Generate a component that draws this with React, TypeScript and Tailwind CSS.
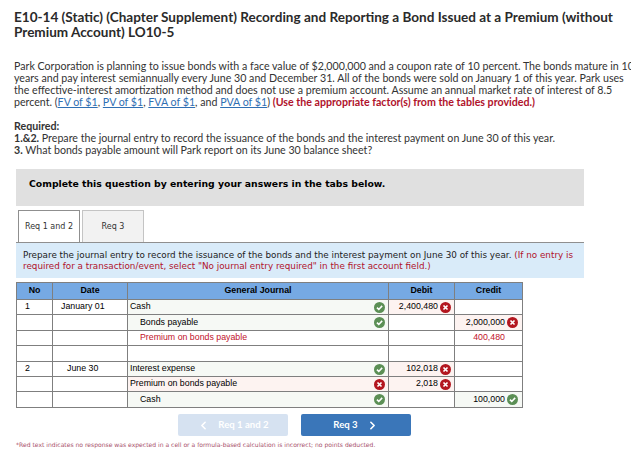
import { ReactNode } from "react";
import { ChevronLeft, ChevronRight } from "lucide-react";

function OkIcon() {
    return (
        <svg viewBox="0 0 12 12" className="w-[11px] h-[11px] shrink-0">
            <circle cx="6" cy="6" r="6" fill="#5b8f55" />
            <path d="M3.2 6.2 L5.2 8.1 L8.9 4.2" fill="none" stroke="#fff" strokeWidth="1.7" />
        </svg>
    );
}

function BadIcon() {
    return (
        <svg viewBox="0 0 12 12" className="w-[11px] h-[11px] shrink-0">
            <circle cx="6" cy="6" r="6" fill="#b3161f" />
            <path d="M3.8 3.8 L8.2 8.2 M8.2 3.8 L3.8 8.2" fill="none" stroke="#fff" strokeWidth="1.8" />
        </svg>
    );
}

function Link({ children }: { children: ReactNode }) {
    return <span className="text-[#2f6fb3] underline">{children}</span>;
}

type Row = {
    no?: string;
    date?: string;
    account?: string;
    indent?: boolean;
    red?: boolean;
    acctState?: "ok" | "bad";
    debit?: string;
    debitState?: "ok" | "bad";
    credit?: string;
    creditState?: "ok" | "bad";
    creditRed?: boolean;
    height: string;
};

const rows: Row[] = [
    { no: "1", date: "January 01", account: "Cash", acctState: "ok", debit: "2,400,480", debitState: "bad", height: "h-[15px]" },
    { account: "Bonds payable", indent: true, acctState: "ok", credit: "2,000,000", creditState: "bad", height: "h-[16px]" },
    { account: "Premium on bonds payable", indent: true, red: true, credit: "400,480", creditRed: true, height: "h-[15px]" },
    { height: "h-[16px]" },
    { no: "2", date: "June 30", account: "Interest expense", acctState: "ok", debit: "102,018", debitState: "bad", height: "h-[15px]" },
    { account: "Premium on bonds payable", acctState: "bad", debit: "2,018", debitState: "bad", height: "h-[15px]" },
    { account: "Cash", indent: true, acctState: "ok", credit: "100,000", creditState: "ok", height: "h-[16px]" },
];

function tint(state?: "ok" | "bad") {
    if (state === "ok") return "bg-[#f6f9f5]";
    if (state === "bad") return "bg-[#fdf3f1]";
    return "bg-white";
}

function StateIcon({ state }: { state?: "ok" | "bad" }) {
    if (state === "ok") return <OkIcon />;
    if (state === "bad") return <BadIcon />;
    return null;
}

function JournalTable() {
    return (
        <table className="ml-4 mt-1 w-[506px] table-fixed border-collapse font-['Liberation_Sans',sans-serif] text-[8.8px] text-black">
            <colgroup>
                <col className="w-[36px]" />
                <col className="w-[75px]" />
                <col className="w-[261px]" />
                <col className="w-[66px]" />
                <col className="w-[68px]" />
            </colgroup>
            <thead>
                <tr className="h-[17px] bg-[#76a9e3] font-bold">
                    <th className="border border-[#7f7f7f] p-0">No</th>
                    <th className="border border-[#7f7f7f] p-0">Date</th>
                    <th className="border border-[#7f7f7f] p-0">General Journal</th>
                    <th className="border border-[#7f7f7f] p-0">Debit</th>
                    <th className="border border-[#7f7f7f] p-0">Credit</th>
                </tr>
            </thead>
            <tbody>
                {rows.map((r, i) => (
                    <tr key={i} className={r.height}>
                        <td className="border border-[#7f7f7f] p-0 pl-[8px]">{r.no}</td>
                        <td className={`border border-[#7f7f7f] p-0 ${r.no === "2" ? "pl-[14px]" : "pl-[8px]"}`}>{r.date}</td>
                        <td className={`border border-[#7f7f7f] p-0 ${tint(r.acctState)}`}>
                            <div className={`flex items-center justify-between pr-[3px] ${r.indent ? "pl-[12px]" : "pl-[2px]"}`}>
                                <span className={r.red ? "text-[#c1122b]" : ""}>{r.account}</span>
                                <StateIcon state={r.acctState} />
                            </div>
                        </td>
                        <td className={`border border-[#7f7f7f] p-0 ${tint(r.debitState)}`}>
                            <div className="flex items-center justify-end gap-[2px] pr-[3px]">
                                <span>{r.debit}</span>
                                <StateIcon state={r.debitState} />
                            </div>
                        </td>
                        <td className={`border border-[#7f7f7f] p-0 ${tint(r.creditState)}`}>
                            <div className={`flex items-center justify-end gap-[2px] pr-[4px] ${r.creditRed ? "pr-[17px]" : ""}`}>
                                <span className={r.creditRed ? "text-[#c1122b]" : ""}>{r.credit}</span>
                                <StateIcon state={r.creditState} />
                            </div>
                        </td>
                    </tr>
                ))}
            </tbody>
        </table>
    );
}

export default function App() {
    return (
        <main className="h-[456px] w-[631px] overflow-hidden bg-white font-['Lato',sans-serif] text-[#333]">
            <div className="whitespace-nowrap pl-[14px] pt-[10px]">
                <h1 className="text-[13.55px] font-bold leading-[15px] text-[#2a2a2a]">
                    E10-14 (Static) (Chapter Supplement) Recording and Reporting a Bond Issued at a Premium (without
                    <br />
                    Premium Account) LO10-5
                </h1>

                <p className="mt-[20px] text-[10.65px] leading-[12px]">
                    Park Corporation is planning to issue bonds with a face value of $2,000,000 and a coupon rate of 10 percent. The bonds mature in 10
                    <br />
                    years and pay interest semiannually every June 30 and December 31. All of the bonds were sold on January 1 of this year. Park uses
                    <br />
                    the effective-interest amortization method and does not use a premium account. Assume an annual market rate of interest of 8.5
                    <br />
                    percent. (<Link>FV of $1</Link>, <Link>PV of $1</Link>, <Link>FVA of $1</Link>, and <Link>PVA of $1</Link>){" "}
                    <b className="text-[#b0122b]">(Use the appropriate factor(s) from the tables provided.)</b>
                </p>

                <p className="mt-[12px] text-[10.65px] leading-[12px]">
                    <b>Required:</b>
                    <br />
                    <b>1.&amp;2.</b> Prepare the journal entry to record the issuance of the bonds and the interest payment on June 30 of this year.
                    <br />
                    <b>3.</b> What bonds payable amount will Park report on its June 30 balance sheet?
                </p>
            </div>

            <div className="ml-4 mt-[13px] h-[37px] w-[568px] bg-[#e0e0e0] pl-[13px] pt-[9px] font-['DejaVu_Sans',sans-serif] text-[9.3px] font-bold leading-[12px] text-black">
                Complete this question by entering your answers in the tabs below.
            </div>

            <div className="ml-[18px] mt-1 flex h-[32px] gap-[2px] font-['DejaVu_Sans',sans-serif] text-[8px]">
                <div className="flex h-[32px] w-[62px] items-center justify-center border border-b-0 border-[#8f8f8f] bg-white">
                    Req 1 and 2
                </div>
                <div className="flex h-[32px] w-[62px] items-center justify-center border border-b-0 border-[#c4c4c4] bg-[#f2f2f2]">
                    Req 3
                </div>
            </div>

            <div className="ml-4 h-[36px] w-[568px] whitespace-nowrap border-t border-[#8f8f8f] bg-[#d9ebf9] pl-[7px] pt-[7px] font-['DejaVu_Sans',sans-serif] text-[8.8px] leading-[11px] text-[#222]">
                Prepare the journal entry to record the issuance of the bonds and the interest payment on June 30 of this year.{" "}
                <span className="text-[#b0122b]">
                    (If no entry is
                    <br />
                    required for a transaction/event, select "No journal entry required" in the first account field.)
                </span>
            </div>

            <JournalTable />

            <div className="ml-[178px] mt-[6px] flex gap-[13px] font-['Lato',sans-serif] text-[9.6px] font-bold text-white">
                <div className="flex h-[22px] w-[110px] items-center justify-center gap-[8px] rounded-[2px] bg-[#d6e2f1]">
                    <ChevronLeft size={13} strokeWidth={3} />
                    <span>Req 1 and 2</span>
                </div>
                <div className="flex h-[22px] w-[110px] items-center justify-center gap-[8px] rounded-[2px] bg-[#3a76b9]">
                    <span>Req 3</span>
                    <ChevronRight size={13} strokeWidth={3} />
                </div>
            </div>

            <p className="ml-4 mt-[5px] font-['DejaVu_Sans',sans-serif] text-[6.05px] leading-[8px] text-[#a8506a]">
                *Red text indicates no response was expected in a cell or a formula-based calculation is incorrect; no points deducted.
            </p>
        </main>
    );
}
